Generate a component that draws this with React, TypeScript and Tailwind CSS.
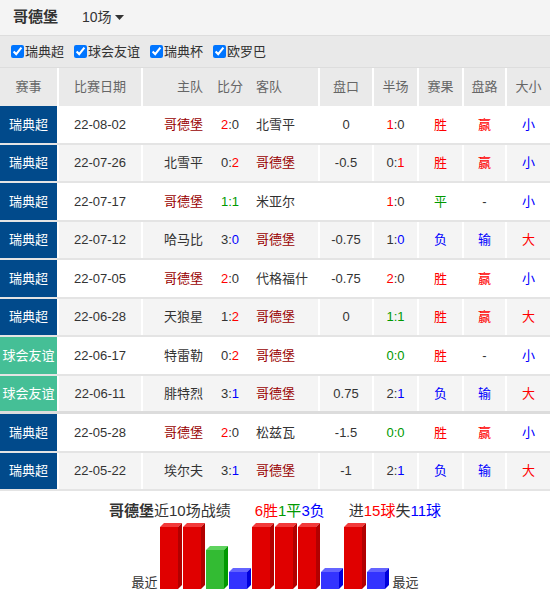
type Match = {
  league: string
  date: string
  home: string
  score: string
  away: string
  handicap: string
  half: string
  result: string
  cover: string
  ou: string
}

const TEAM = '哥德堡'

const matches: Match[] = [
  { league: '瑞典超', date: '22-08-02', home: '哥德堡', score: '2:0', away: '北雪平', handicap: '0', half: '1:0', result: '胜', cover: '赢', ou: '小' },
  { league: '瑞典超', date: '22-07-26', home: '北雪平', score: '0:2', away: '哥德堡', handicap: '-0.5', half: '0:1', result: '胜', cover: '赢', ou: '小' },
  { league: '瑞典超', date: '22-07-17', home: '哥德堡', score: '1:1', away: '米亚尔', handicap: '', half: '1:0', result: '平', cover: '-', ou: '小' },
  { league: '瑞典超', date: '22-07-12', home: '哈马比', score: '3:0', away: '哥德堡', handicap: '-0.75', half: '1:0', result: '负', cover: '输', ou: '大' },
  { league: '瑞典超', date: '22-07-05', home: '哥德堡', score: '2:0', away: '代格福什', handicap: '-0.75', half: '2:0', result: '胜', cover: '赢', ou: '小' },
  { league: '瑞典超', date: '22-06-28', home: '天狼星', score: '1:2', away: '哥德堡', handicap: '0', half: '1:1', result: '胜', cover: '赢', ou: '大' },
  { league: '球会友谊', date: '22-06-17', home: '特雷勒', score: '0:2', away: '哥德堡', handicap: '', half: '0:0', result: '胜', cover: '-', ou: '小' },
  { league: '球会友谊', date: '22-06-11', home: '腓特烈', score: '3:1', away: '哥德堡', handicap: '0.75', half: '2:1', result: '负', cover: '输', ou: '大' },
  { league: '瑞典超', date: '22-05-28', home: '哥德堡', score: '2:0', away: '松兹瓦', handicap: '-1.5', half: '0:0', result: '胜', cover: '赢', ou: '小' },
  { league: '瑞典超', date: '22-05-22', home: '埃尔夫', score: '3:1', away: '哥德堡', handicap: '-1', half: '2:1', result: '负', cover: '输', ou: '大' },
]

const markColor: Record<string, string> = {
  胜: 'text-[#ff0000]',
  赢: 'text-[#ff0000]',
  大: 'text-[#ff0000]',
  平: 'text-[#009900]',
  负: 'text-[#0000ff]',
  输: 'text-[#0000ff]',
  小: 'text-[#0000ff]',
  '-': 'text-[#333333]',
}

function Score({ value, teamHome }: { value: string; teamHome: boolean }) {
  const [h, a] = value.split(':')
  const mine = teamHome ? Number(h) : Number(a)
  const theirs = teamHome ? Number(a) : Number(h)
  if (mine === theirs) return <span className="text-[#009900]">{value}</span>
  const cls = mine > theirs ? 'text-[#ff0000]' : 'text-[#0000ff]'
  return teamHome ? (
    <span>
      <span className={cls}>{h}</span>:{a}
    </span>
  ) : (
    <span>
      {h}:<span className={cls}>{a}</span>
    </span>
  )
}

function Team({ name }: { name: string }) {
  return <span className={name === TEAM ? 'text-[#990000]' : 'text-[#333333]'}>{name}</span>
}

function Filter({ label }: { label: string }) {
  return (
    <label className="flex items-center gap-[1px]">
      <input type="checkbox" checked readOnly className="w-[13px] h-[13px] accent-[#0075ff]" />
      <span>{label}</span>
    </label>
  )
}

// 3D bar chart, newest match on the left
function Bars() {
  const colors = {
    胜: { front: '#e00000', top: '#f23a3a', side: '#b20000' },
    平: { front: '#33bb33', top: '#5fd35f', side: '#009900' },
    负: { front: '#3333ff', top: '#6464ff', side: '#0000dd' },
  } as Record<string, { front: string; top: string; side: string }>
  const heights: Record<string, number> = { 胜: 62, 平: 39, 负: 17 }
  const base = 66
  return (
    <svg width="231" height="67" viewBox="0 0 231 67">
      {matches.map((m, i) => {
        const x = i * 23
        const h = heights[m.result]
        const y = base - h
        const c = colors[m.result]
        return (
          <g key={i}>
            <rect x={x} y={y} width={18} height={h} fill={c.front} />
            <polygon points={`${x},${y} ${x + 4},${y - 4} ${x + 22},${y - 4} ${x + 18},${y}`} fill={c.top} />
            <polygon points={`${x + 18},${y} ${x + 22},${y - 4} ${x + 22},${base - 4} ${x + 18},${base}`} fill={c.side} />
          </g>
        )
      })}
    </svg>
  )
}

export default function App() {
  const cell = 'flex items-center justify-center h-full'
  const sep = 'border-r-2 border-white'

  return (
    <div className="w-[550px] bg-white text-[13px] text-[#333333] font-['Liberation_Sans','Noto_Sans_CJK_SC',sans-serif]">
      <div className="h-[36px] bg-[#f4f4f4] border-b border-[#dddddd] flex items-center">
        <span className="ml-[13px] text-[15px] font-bold text-[#333333]">哥德堡</span>
        <span className="ml-[24px] text-[14px] text-[#333333] flex items-center gap-[3px]">
          10场
          <svg width="9" height="5" viewBox="0 0 9 5">
            <polygon points="0,0 9,0 4.5,5" fill="#333333" />
          </svg>
        </span>
      </div>

      <div className="h-[32px] bg-[#e9e9e9] border-b border-[#dddddd] flex items-center gap-[10px] pl-[11px] text-[#333333]">
        <Filter label="瑞典超" />
        <Filter label="球会友谊" />
        <Filter label="瑞典杯" />
        <Filter label="欧罗巴" />
      </div>

      <div className="h-[38px] bg-[#eaeaea] flex text-[#666666]">
        <div className={`w-[59px] ${cell} ${sep}`}>赛事</div>
        <div className={`w-[84px] ${cell} ${sep}`}>比赛日期</div>
        <div className="w-[70px] h-full flex items-center justify-end pr-[10px]">主队</div>
        <div className={`w-[34px] ${cell}`}>比分</div>
        <div className={`w-[73px] h-full flex items-center pl-[9px] ${sep}`}>客队</div>
        <div className={`w-[54px] ${cell} ${sep}`}>盘口</div>
        <div className={`w-[45px] ${cell} ${sep}`}>半场</div>
        <div className={`w-[45px] ${cell} ${sep}`}>赛果</div>
        <div className={`w-[43px] ${cell} ${sep}`}>盘路</div>
        <div className={`flex-1 ${cell}`}>大小</div>
      </div>

      {matches.map((m, i) => {
        const teamHome = m.home === TEAM
        return (
          <div
            key={m.date}
            className={`h-[38.5px] flex ${i % 2 ? 'bg-[#f4f4f4]' : 'bg-white'} ${
              i === 7 ? 'border-b-[3px] border-[#dcdcdc]' : 'border-b-2 border-[#e4e4e4]'
            }`}
          >
            <div
              className={`w-[59px] ${cell} ${sep} text-white ${
                m.league === '瑞典超' ? 'bg-[#014a8b]' : 'bg-[#45bf96]'
              }`}
            >
              {m.league}
            </div>
            <div className={`w-[84px] ${cell} ${sep}`}>{m.date}</div>
            <div className="w-[70px] h-full flex items-center justify-end pr-[10px]">
              <Team name={m.home} />
            </div>
            <div className={`w-[34px] ${cell}`}>
              <Score value={m.score} teamHome={teamHome} />
            </div>
            <div className={`w-[73px] h-full flex items-center pl-[9px] ${sep}`}>
              <Team name={m.away} />
            </div>
            <div className={`w-[54px] ${cell} ${sep}`}>{m.handicap}</div>
            <div className={`w-[45px] ${cell} ${sep}`}>
              <Score value={m.half} teamHome={teamHome} />
            </div>
            <div className={`w-[45px] ${cell} ${sep} ${markColor[m.result]}`}>{m.result}</div>
            <div className={`w-[43px] ${cell} ${sep} ${markColor[m.cover]}`}>{m.cover}</div>
            <div className={`flex-1 ${cell} ${markColor[m.ou]}`}>{m.ou}</div>
          </div>
        )
      })}

      <div className="pt-[10px] flex justify-center gap-[24px] text-[15px] leading-[20px]">
        <span>
          <span className="font-bold">哥德堡</span>近10场战绩
        </span>
        <span>
          <span className="text-[#ff0000]">6胜</span>
          <span className="text-[#009900]">1平</span>
          <span className="text-[#0000ff]">3负</span>
        </span>
        <span>
          进<span className="text-[#ff0000]">15球</span>失<span className="text-[#0000ff]">11球</span>
        </span>
      </div>

      <div className="flex justify-center items-end gap-[2px] mt-[2px]">
        <span className="text-[13px] leading-[14px]">最近</span>
        <Bars />
        <span className="text-[13px] leading-[14px]">最远</span>
      </div>
    </div>
  )
}
